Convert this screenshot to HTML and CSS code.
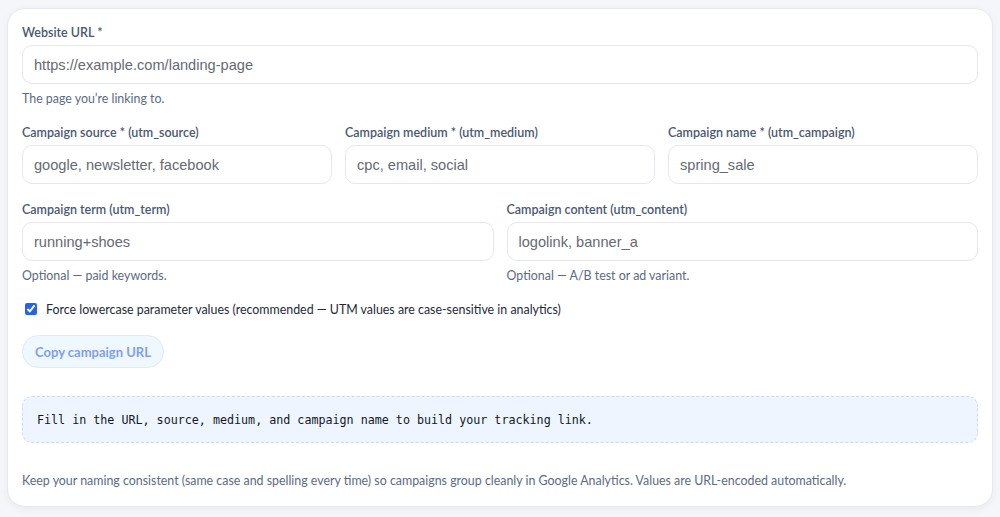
FILE: index.html
```html
<!DOCTYPE html>
<html lang="en">
<head>
  <meta charset="UTF-8">
  <meta name="viewport" content="width=device-width, initial-scale=1.0">
  <title>UTM Campaign URL Builder</title>
  <link rel="stylesheet" href="styles.css">
</head>
<body>
  <div class="card">
    <div class="field">
      <label for="url">Website URL *</label>
      <input type="text" id="url" placeholder="https://example.com/landing-page">
      <p class="hint">The page you’re linking to.</p>
    </div>

    <div class="row three">
      <div class="field">
        <label for="source">Campaign source * (utm_source)</label>
        <input type="text" id="source" placeholder="google, newsletter, facebook">
      </div>
      <div class="field">
        <label for="medium">Campaign medium * (utm_medium)</label>
        <input type="text" id="medium" placeholder="cpc, email, social">
      </div>
      <div class="field">
        <label for="campaign">Campaign name * (utm_campaign)</label>
        <input type="text" id="campaign" placeholder="spring_sale">
      </div>
    </div>

    <div class="row two">
      <div class="field">
        <label for="term">Campaign term (utm_term)</label>
        <input type="text" id="term" placeholder="running+shoes">
        <p class="hint">Optional — paid keywords.</p>
      </div>
      <div class="field">
        <label for="content">Campaign content (utm_content)</label>
        <input type="text" id="content" placeholder="logolink, banner_a">
        <p class="hint">Optional — A/B test or ad variant.</p>
      </div>
    </div>

    <label class="check">
      <input type="checkbox" checked>
      Force lowercase parameter values (recommended — UTM values are case-sensitive in analytics)
    </label>

    <button class="copy" disabled>Copy campaign URL</button>

    <div class="output">Fill in the URL, source, medium, and campaign name to build your tracking link.</div>

    <p class="note">Keep your naming consistent (same case and spelling every time) so campaigns group cleanly in Google Analytics. Values are URL-encoded automatically.</p>
  </div>
</body>
</html>
```

FILE: styles.css
```css
* {
  box-sizing: border-box;
}

body {
  margin: 0;
  padding: 8px 7px;
  background: #f4f6f9;
  font-family: Lato, "Liberation Sans", sans-serif;
}

.card {
  background: #fff;
  border: 1px solid #e6e9ef;
  border-radius: 18px;
  box-shadow: 0 2px 8px rgba(15, 23, 42, 0.05);
  padding: 16px 14px 17px;
}

.field {
  display: flex;
  flex-direction: column;
  min-width: 0;
}

.field label {
  font-size: 12.5px;
  font-weight: 600;
  color: #4a5871;
  margin-bottom: 4px;
  line-height: 16px;
}

.field input {
  width: 100%;
  height: 39px;
  border: 1px solid #e5e7eb;
  border-radius: 10px;
  padding: 0 11px;
  font-family: "Liberation Sans", Arial, sans-serif;
  font-size: 14.6px;
  color: #111827;
  background: #fff;
}

.field input::placeholder {
  color: #666a72;
}

.hint {
  margin: 7px 0 0;
  font-size: 12.4px;
  line-height: 16px;
  color: #5b6b82;
}

.row {
  display: grid;
  gap: 13px;
}

.three {
  grid-template-columns: repeat(3, 1fr);
  margin-top: 18px;
}

.two {
  grid-template-columns: repeat(2, 1fr);
  margin-top: 18px;
}

.check {
  display: flex;
  align-items: center;
  gap: 9px;
  margin-top: 16px;
  padding-left: 3px;
  height: 18px;
  font-size: 12.4px;
  color: #1f2937;
}

.check input {
  margin: 0;
  width: 12px;
  height: 12px;
  accent-color: #2563eb;
}

.copy {
  display: block;
  margin-top: 17px;
  height: 33px;
  padding: 0 12px;
  border: 1px solid #dbeafe;
  border-radius: 17px;
  background: #f0f8ff;
  color: #7ea0ee;
  font-family: Lato, "Liberation Sans", sans-serif;
  font-size: 13px;
  font-weight: 700;
}

.output {
  margin-top: 28px;
  height: 47px;
  display: flex;
  align-items: center;
  padding: 0 14px;
  background: #eef5ff;
  border: 1px dashed #cfdaea;
  border-radius: 10px;
  font-family: "DejaVu Sans Mono", monospace;
  font-size: 11.7px;
  color: #111827;
}

.note {
  margin: 30px 0 0;
  font-size: 12.4px;
  line-height: 16px;
  color: #5b6b82;
}
```
